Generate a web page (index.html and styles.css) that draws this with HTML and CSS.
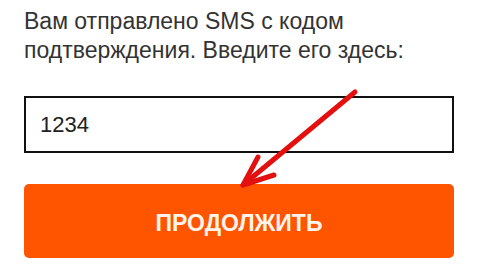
FILE: index.html
```html
<!DOCTYPE html>
<html lang="ru">
<head>
<meta charset="utf-8">
<link rel="stylesheet" href="styles.css">
</head>
<body>
<div class="form">
  <p class="hint">Вам отправлено SMS с кодом подтверждения. Введите его здесь:</p>
  <div class="field"><span class="value">1234</span></div>
  <div class="button">ПРОДОЛЖИТЬ</div>
  <svg class="arrow" width="480" height="278" viewBox="0 0 480 278">
    <g fill="none" stroke="#e3100f" stroke-width="5" stroke-linecap="round" stroke-linejoin="round">
      <path d="M355 92 L243 185"/>
      <path d="M258 157 L243 185 L274 175"/>
    </g>
  </svg>
</div>
</body>
</html>
```
FILE: styles.css
```css
html, body {
  margin: 0;
  padding: 0;
  background: #ffffff;
}
.form {
  position: relative;
  width: 480px;
  height: 278px;
  padding: 0 26px 0 24px;
  box-sizing: border-box;
  font-family: "Liberation Sans", Arial, sans-serif;
}
.hint {
  margin: 0;
  padding-top: 7px;
  font-size: 23px;
  line-height: 29px;
  color: #333333;
  width: 420px;
}
.field {
  margin-top: 31px;
  height: 57px;
  border: 2px solid #111111;
  box-sizing: border-box;
  display: flex;
  align-items: center;
  padding-left: 14px;
}
.value {
  font-size: 22px;
  color: #222222;
}
.button {
  margin-top: 31px;
  height: 74px;
  padding-top: 5px;
  box-sizing: border-box;
  background: #ff5400;
  border-radius: 5px;
  display: flex;
  align-items: center;
  justify-content: center;
  color: #fff4ec;
  font-weight: bold;
  font-size: 23px;
}
.arrow {
  position: absolute;
  left: 0;
  top: 0;
  pointer-events: none;
}
```
